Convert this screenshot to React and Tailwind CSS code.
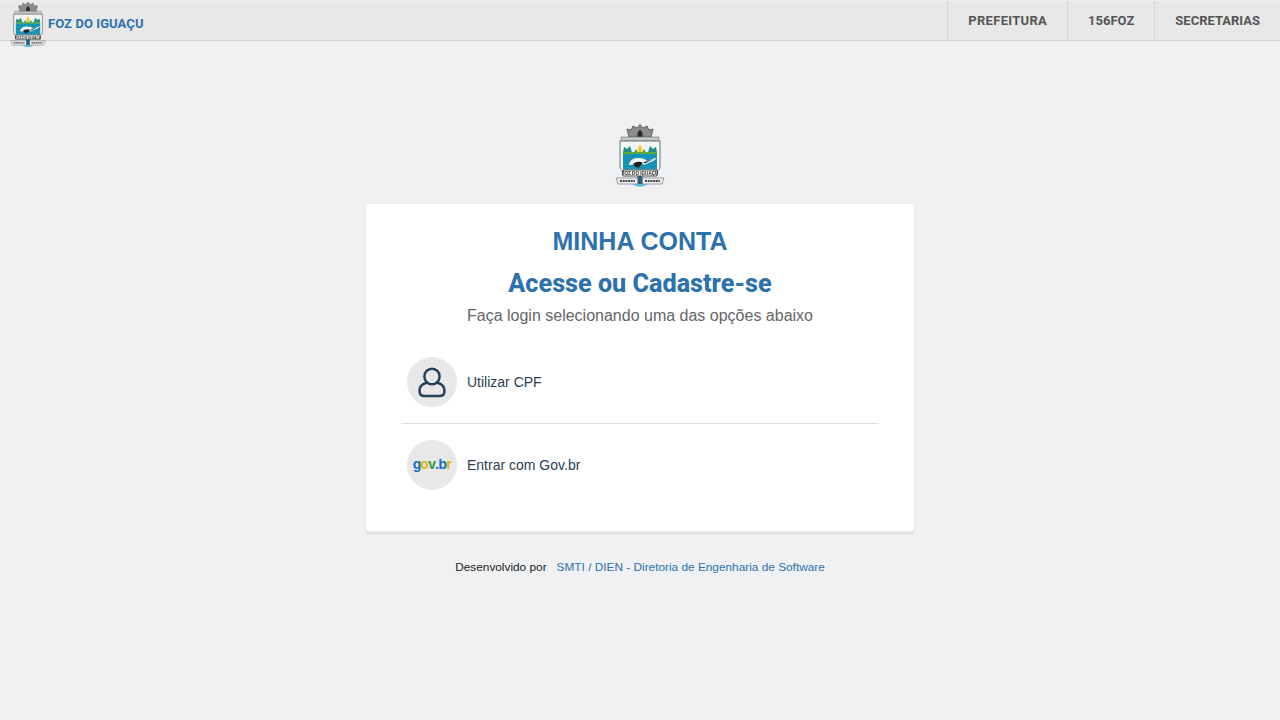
import React from "react";

function Crest({ className }) {
  return (
    <svg viewBox="0 0 50 64" className={className}>
      {/* mural crown */}
      <path d="M14 13 L12 5 L16 6 L18 2 L22 4 L25 0.5 L28 4 L32 2 L34 6 L38 5 L36 13 Z" fill="#8b8c8e" stroke="#4a4b4d" strokeWidth="0.8" />
      <path d="M22.5 9 Q25 3 27.5 9 V13 H22.5 Z" fill="#27282a" />
      <path d="M6 13 H44 V17 H6 Z" fill="#c4c6c8" stroke="#77797c" strokeWidth="0.6" />
      {/* shield */}
      <path d="M5 17 H45 V42 Q45 47 40 47 H10 Q5 47 5 42 Z" fill="#f3f5f5" stroke="#63666a" strokeWidth="0.9" />
      <path d="M8 28.5 L9 23 L12 25 L15 22 L17 28.5 Z" fill="#1f8f86" />
      <path d="M33 28.5 L35 22 L38 25 L41 23 L42 28.5 Z" fill="#1f8f86" />
      <path d="M19 28.5 L21 25 L23 28.5 Z M27 28.5 L29 25 L31 28.5 Z" fill="#3aa36f" />
      <path d="M22 29 Q25 13 28 29 Z" fill="#f3cc2a" />
      <path d="M8 28 H42 V30.5 H8 Z" fill="#5cab3d" />
      <path d="M8 30 H42 V45.5 H8 Z" fill="#1794b5" />
      <path d="M14 41 Q15 34 23 34 Q30 34 32 37 Q28 41 22 40.5 Q17 40.5 14 41 Z" fill="#f6f9f9" />
      <path d="M18 40 Q22 36.5 28 38.5 L24 43.5 Q20 44 18 40 Z" fill="#1f2224" />
      <path d="M27 38.5 L42 33.5 L39 36.5 L29 41 Z" fill="#e9f3f4" />
      <path d="M28 38.5 L38 35 L30 39.5 Z" fill="#2a2d2f" />
      {/* ribbons */}
      <path d="M8 46 H42 V52 H8 Z" fill="#f8f8f8" stroke="#3c3e40" strokeWidth="0.9" />
      <text x="25" y="50.8" textAnchor="middle" fontFamily="Liberation Sans, sans-serif" fontSize="4.6" fontWeight="700" fill="#1f1f1f">FOZ DO IGUAÇU</text>
      <path d="M1 54 H49 L47 60 H3 Z" fill="#eeeeee" stroke="#77797b" strokeWidth="0.7" />
      <path d="M5 57 H20 M30 57 H45" stroke="#444" strokeWidth="1.8" strokeDasharray="2 0.7" />
      <path d="M22.5 52 H27.5 V60 H22.5 Z" fill="#2c5f7f" />
      <path d="M17 60 Q25 65.5 33 60 Z" fill="#58b6d6" />
    </svg>
  );
}

function NavItem({ children, className }) {
  return (
    <a className={`flex h-full items-center border-l border-[#d5d5d5] px-5 font-['Roboto',sans-serif] text-[13px] font-bold text-[#555555] ${className}`}>
      {children}
    </a>
  );
}

function Circle({ children }) {
  return (
    <span className="flex h-[50px] w-[50px] shrink-0 items-center justify-center rounded-full bg-[#e8e8e8]">
      {children}
    </span>
  );
}

export default function App() {
  return (
    <div className="flex min-h-[720px] flex-col items-center bg-[#f0f1f3] font-['Liberation_Sans',Arial,sans-serif]">
      <header className="flex h-[41px] w-full items-start justify-between border-y border-t-[#eeeeee] border-b-[#d5d5d5] bg-[#e8e8e8]">
        <div className="flex items-start pl-[10px]">
          <Crest className="mt-[1px] h-[46px] w-[36px] blur-[0.3px]" />
          <span className="ml-[2px] mt-[15px] font-['Roboto',sans-serif] text-[13px] font-bold leading-[16px] tracking-[0.08px] text-[#2d71ad]">
            FOZ DO IGUAÇU
          </span>
        </div>
        <nav className="flex h-[39px]">
          <NavItem className="tracking-[0.3px]">PREFEITURA</NavItem>
          <NavItem>156FOZ</NavItem>
          <NavItem>SECRETARIAS</NavItem>
        </nav>
      </header>

      <Crest className="mt-[83px] h-[64px] w-[50px] blur-[0.4px]" />

      <main className="mt-[15px] flex h-[329px] w-[550px] flex-col rounded border border-[#ebebeb] bg-white px-[35px] pt-[22px] shadow-[0_3px_1px_rgba(0,0,0,0.05)]">
        <h1 className="text-center text-[25px] font-bold leading-[30px] text-[#2d71ad]">MINHA CONTA</h1>
        <h2 className="mt-[13px] text-center font-['Roboto',sans-serif] text-[25.2px] font-extrabold leading-[30px] text-[#2d71ad]">
          Acesse ou Cadastre-se
        </h2>
        <p className="mt-[5px] text-center text-base leading-[24px] text-[#666666]">
          Faça login selecionando uma das opções abaixo
        </p>
        <a className="mt-[29px] flex items-center gap-[10px] border-b border-[#dddddd] px-[6px] pb-[16px] text-sm text-[#2c3e50]">
          <Circle>
            <svg viewBox="0 0 28 32" className="h-[32px] w-[28px]" fill="none" stroke="#25405f" strokeWidth="2.5">
              <ellipse cx="14" cy="10.5" rx="7.6" ry="7.8" />
              <path d="M9 16.5 C4 18 1.6 20.5 1.6 24 V25.5 Q1.6 30 6.5 30 H21.5 Q26.4 30 26.4 25.5 V24 C26.4 20.5 24 18 19 16.5" strokeLinecap="round" />
            </svg>
          </Circle>
          Utilizar CPF
        </a>
        <a className="mt-4 flex items-center gap-[10px] px-[6px] text-sm text-[#2c3e50]">
          <Circle>
            <span className="font-['Inter',sans-serif] text-[13.5px] font-bold leading-none tracking-[-0.7px]">
              <span className="text-[#1b6fc0]">g</span>
              <span className="text-[#e5b60e]">o</span>
              <span className="text-[#2f9e44]">v</span>
              <span className="text-[#1b6fc0]">.b</span>
              <span className="text-[#e5b60e]">r</span>
            </span>
          </Circle>
          Entrar com Gov.br
        </a>
      </main>

      <footer className="mt-[27px] flex gap-[10px] text-[11.83px] leading-[16px]">
        <span className="text-[#222222]">Desenvolvido por</span>
        <a className="text-[#2d71ad]">SMTI / DIEN - Diretoria de Engenharia de Software</a>
      </footer>
    </div>
  );
}
